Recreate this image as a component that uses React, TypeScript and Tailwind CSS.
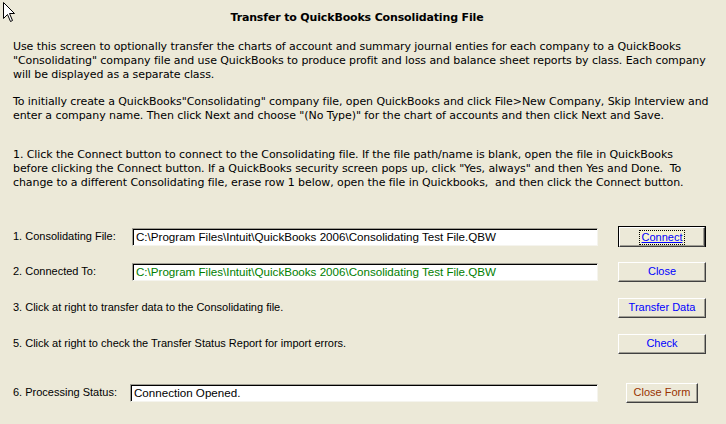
import React from "react";

const btnBase =
  "flex items-center justify-center h-[20px] bg-[#ECE9D8] border border-t-white border-l-white border-r-[#404040] border-b-[#404040] shadow-[inset_-1px_-1px_0_#A09E94] text-[11px] leading-none";

const FormButton: React.FC<{ label: string; width: string; color?: string; focused?: boolean }> = ({
  label,
  width,
  color = "text-[#0000FF]",
  focused,
}) => {
  if (focused) {
    return (
      <div className={`${width} h-[21px] border border-black`}>
        <div className={`${btnBase} h-[19px] w-full ${color}`}>
          <span className="px-[2px] py-[1px] border border-dotted border-black bg-[#FFFFCC]/40 underline">{label}</span>
        </div>
      </div>
    );
  }
  return <div className={`${btnBase} ${width} ${color}`}>{label}</div>;
};

const TextBox: React.FC<{ value: string; green?: boolean; width: string }> = ({ value, green, width }) => (
  <div
    className={`${width} h-[18px] bg-white border border-t-[#A09E94] border-l-[#A09E94] border-r-[#F5F4EE] border-b-[#F5F4EE] shadow-[inset_1px_1px_0_#000] pl-[3px] flex items-center text-[11.6px] whitespace-nowrap overflow-hidden ${
      green ? "text-[#008000]" : "text-black"
    }`}
  >
    {value}
  </div>
);

const App: React.FC = () => {
  const path = "C:\\Program Files\\Intuit\\QuickBooks 2006\\Consolidating Test File.QBW";

  return (
    <div
      className="relative w-[726px] h-[424px] bg-[#ECE9D8] text-black text-[11px] tracking-[-0.08px] overflow-hidden"
      style={{ fontFamily: "'DejaVu Sans', Tahoma, sans-serif" }}
    >
      {/* mouse pointer left in the capture */}
      <svg className="absolute left-[3px] top-[2px]" width="14" height="22" viewBox="0 0 14 22">
        <path
          d="M0.5 0.5 L0.5 16.5 L4.5 12.5 L7.5 19.5 L9.5 18.5 L6.5 11.5 L11.5 11.5 Z"
          fill="white"
          stroke="black"
          strokeWidth="1"
        />
      </svg>

      <div className="pt-[11px]">
        <h1 className="text-center font-bold text-[11px] leading-[14px] pr-[12px] tracking-[-0.15px]">
          Transfer to QuickBooks Consolidating File
        </h1>

        <div className="px-[13px] leading-[14px] whitespace-nowrap">
          <p className="mt-[15px]">
            Use this screen to optionally transfer the charts of account and summary journal enties for each company to a QuickBooks
            <br />
            "Consolidating" company file and use QuickBooks to produce profit and loss and balance sheet reports by class. Each company
            <br />
            will be displayed as a separate class.
          </p>
          <p className="mt-[13px]">
            To initially create a QuickBooks"Consolidating" company file, open QuickBooks and click File&gt;New Company, Skip Interview and
            <br />
            enter a company name. Then click Next and choose "(No Type)" for the chart of accounts and then click Next and Save.
          </p>
          <p className="mt-[25px]">
            1. Click the Connect button to connect to the Consolidating file. If the file path/name is blank, open the file in QuickBooks
            <br />
            before clicking the Connect button. If a QuickBooks security screen pops up, click "Yes, always" and then Yes and Done.&nbsp; To
            <br />
            change to a different Consolidating file, erase row 1 below, open the file in Quickbooks,&nbsp; and then click the Connect button.
          </p>
        </div>

        {/* lower controls use the narrower system font */}
        <div className="pl-[13px] tracking-normal" style={{ fontFamily: "'Liberation Sans', Arial, sans-serif" }}>
          <div className="mt-[36px] h-[21px] flex items-center">
            <span className="w-[119px]">1. Consolidating File:</span>
            <TextBox width="w-[466px]" value={path} />
            <div className="ml-[20px]">
              <FormButton label="Connect" width="w-[88px]" focused />
            </div>
          </div>

          <div className="mt-[14px] h-[21px] flex items-center">
            <span className="w-[119px]">2. Connected To:</span>
            <TextBox width="w-[466px]" value={path} green />
            <div className="ml-[20px]">
              <FormButton label="Close" width="w-[88px]" />
            </div>
          </div>

          <div className="mt-[15px] h-[21px] flex items-center">
            <span className="w-[585px]">3. Click at right to transfer data to the Consolidating file.</span>
            <div className="ml-[20px]">
              <FormButton label="Transfer Data" width="w-[88px]" />
            </div>
          </div>

          <div className="mt-[15px] h-[21px] flex items-center">
            <span className="w-[585px]">5. Click at right to check the Transfer Status Report for import errors.</span>
            <div className="ml-[20px]">
              <FormButton label="Check" width="w-[88px]" />
            </div>
          </div>

          <div className="mt-[28px] h-[21px] flex items-center">
            <span className="w-[117px]">6. Processing Status:</span>
            <TextBox width="w-[468px]" value="Connection Opened." />
            <div className="ml-[28px]">
              <FormButton label="Close Form" width="w-[72px]" color="text-[#993300]" />
            </div>
          </div>
        </div>
      </div>
    </div>
  );
};

export default App;
